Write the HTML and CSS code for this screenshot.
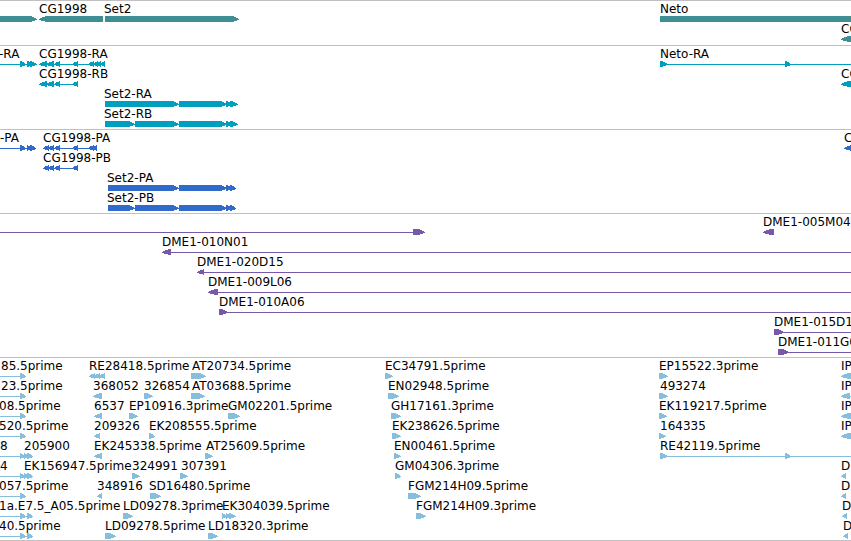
FILE: index.html
```
<!DOCTYPE html>
<html lang="en">
<head>
<meta charset="utf-8">
<title>Genome browser</title>
<link rel="stylesheet" href="styles.css">
</head>
<body>
<main class="browser">
  <section class="track gene" aria-label="Genes"></section>
  <section class="track transcript" aria-label="Transcripts"></section>
  <section class="track protein" aria-label="Proteins"></section>
  <section class="track clone" aria-label="Clones"></section>
  <section class="track est" aria-label="ESTs"></section>
</main>
<script src="tracks.js"></script>
</body>
</html>
```
FILE: styles.css
```
body {
  margin: 0;
  background: #fff;
  color: #000;
  font: 12px "DejaVu Sans", sans-serif;
}

.browser {
  overflow: hidden;
  border-bottom: 1px solid #c0c0c0;
}

.track {
  border-top: 1px solid #c0c0c0;
  padding-bottom: 3px;
}

.gene {
  color: #3f8e94;
  padding-bottom: 4px;
}

.transcript {
  color: #009fc0;
}

.protein {
  color: #306acb;
}

.clone {
  color: #7759a8;
}

.est {
  color: #87bddd;
  padding-bottom: 2px;
}

.row {
  display: block;
  width: 100%;
  height: 20px;
  overflow: visible;
}

.row text {
  fill: #000;
}

.glyph {
  fill: currentColor;
  shape-rendering: crispEdges;
}
```
FILE: tracks.js
```
// Feature: [label, label x, direction, exons, intron line start, intron line end]
const END = 4000;
const tail = [[226, 232], [230, 238]];
const proteinTail = [[226, 232], [230, 236]];
const tracks = {
  gene: [
    [["", 0, 1, [[-20, 37]]], ["CG1998", 39, -1, [[39, 103]]],
     ["Set2", 104, 1, [[105, 239]]], ["Neto", 660, 1, [[660, END]]]],
    [["CG", 841, -1, [[841, END]]]]
  ],
  transcript: [
    [["-RA", -1, 1, [[20, 26], [27, 33], [30, 37]], 0, 30],
     ["CG1998-RA", 39, -1, [[39, 47], [46, 54], [54, 60], [72, 78], [88, 94], [93, 98], [96, 101], [100, 105]], 45, 100],
     ["Neto-RA", 660, 1, [[660, 668], [785, 791]], 660, END]],
    [["CG1998-RB", 39, -1, [[39, 47], [46, 54], [54, 60], [72, 78]], 45, 78],
     ["CG", 841, -1, [[841, END]]]],
    [["Set2-RA", 104, 1, [[105, 179], [179, 227], ...tail], 110, 230]],
    [["Set2-RB", 104, 1, [[105, 135], [135, 179], [179, 227], ...tail], 110, 230]]
  ],
  protein: [
    [["-PA", 0, 1, [[20, 26], [27, 32], [30, 36]], 0, 30],
     ["CG1998-PA", 43, -1, [[43, 49], [48, 54], [54, 60], [72, 78], [88, 94], [92, 97]], 45, 95],
     ["CG", 844, -1, [[844, END]]]],
    [["CG1998-PB", 43, -1, [[43, 49], [48, 54], [54, 60], [72, 78]], 45, 78]],
    [["Set2-PA", 107, 1, [[108, 179], [179, 227], ...proteinTail], 110, 230]],
    [["Set2-PB", 107, 1, [[108, 135], [135, 179], [179, 227], ...proteinTail], 110, 230]]
  ],
  clone: [
    [["", 0, 1, [[413, 425]], 0, 414], ["DME1-005M04", 763, -1, [[763, 774]]]],
    [["DME1-010N01", 162, -1, [[162, 171]], 170, END]],
    [["DME1-020D15", 197, -1, [[197, 204]], 203, END]],
    [["DME1-009L06", 208, -1, [[208, 218]], 217, END]],
    [["DME1-010A06", 219, 1, [[219, 228]], 220, END]],
    [["DME1-015D12", 774, 1, [[774, 784]], 776, END]],
    [["DME1-011G07", 778, 1, [[778, 789]], 780, END]]
  ],
  est: [
    [["85.5prime", 1, 1, [[20, 26]], 0, 21],
     ["RE28418.5prime", 89, -1, [[89, 95], [93, 100], [98, 105]]],
     ["AT20734.5prime", 192, 1, [[191, 206]]], ["EC34791.5prime", 385, 1, [[385, 393]]],
     ["EP15522.3prime", 659, 1, [[659, 668]]], ["IP", 841, -1, [[841, END]]]],
    [["23.5prime", 1, 1, [[20, 26]], 0, 21],
     ["368052", 93, -1, [[93, 102]]], ["326854", 144, 1, [[144, 153]]],
     ["AT03688.5prime", 192, 1, [[191, 205]]], ["EN02948.5prime", 388, 1, [[388, 399]]],
     ["493274", 660, 1, [[659, 668]]], ["IP", 841, -1, [[841, 850]], 848, END]],
    [["08.5prime", -1, 1, [[20, 26]], 0, 21],
     ["6537", 94, -1, [[94, 102]]], ["EP10916.3prime", 129, 1, [[129, 138]]],
     ["GM02201.5prime", 228, 1, [[228, 240]]], ["GH17161.3prime", 391, 1, [[391, 401]]],
     ["EK119217.5prime", 659, 1, [[659, 667]]], ["IP", 841, -1, [[841, END]]]],
    [["520.5prime", -1, 1, [[20, 26]], 0, 21],
     ["209326", 94, -1, [[94, 100]]], ["EK208555.5prime", 149, 1, [[149, 155]]],
     ["EK238626.5prime", 392, 1, [[392, 401]]], ["164335", 660, 1, [[659, 666]]],
     ["IP", 841, -1, [[841, END]]]],
    [["8", 0, 1, [[20, 25], [24, 29], [27, 33]], 0, 28], ["205900", 24, 1, []],
     ["EK245338.5prime", 94, -1, [[94, 102]]], ["AT25609.5prime", 206, 1, [[205, 213]]],
     ["EN00461.5prime", 394, 1, [[394, 401]]],
     ["RE42119.5prime", 660, 1, [[660, 668], [785, 791]], 662, END]],
    [["4", 0, 1, [[20, 25], [24, 29], [27, 33]], 0, 28], ["EK156947.5prime", 24, 1, []],
     ["324991", 132, 1, [[132, 140]]], ["307391", 181, 1, [[180, 188]]],
     ["GM04306.3prime", 395, 1, [[395, 401]]], ["D", 841, -1, [[841, 846]]]],
    [["057.5prime", -1, 1, [[20, 26]], 0, 21], ["348916", 97, -1, [[97, 102]]],
     ["SD16480.5prime", 149, 1, [[150, 161]]], ["FGM214H09.5prime", 408, 1, [[408, 421]]],
     ["D", 841, -1, [[841, 846]]]],
    [["1a.E7.5_A05.5prime", -1, 1, [[20, 26], [27, 33]], 0, 28],
     ["LD09278.3prime", 123, 1, [[123, 133]]],
     ["EK304039.5prime", 222, 1, [[222, 227], [226, 231], [229, 236]]],
     ["FGM214H09.3prime", 416, 1, [[416, 426]]], ["D", 842, -1, [[842, 847]]]],
    [["40.5prime", -1, 1, [[20, 26], [27, 33]], 0, 28],
     ["LD09278.5prime", 105, 1, [[105, 116]]], ["LD18320.3prime", 208, 1, [[208, 218]]],
     ["D", 843, -1, [[843, 848]]]]
  ]
};

// Block six pixels tall with a bulging head that points in its direction.
function arrow([a, b], dir) {
  const w = Math.min(7, b - a);
  const tip = dir > 0 ? b : a;
  const back = dir > 0 ? a : b;
  const neck = tip - dir * w;
  const mid = tip - dir * Math.round(w / 2);
  return `<path d="M${back} 15H${neck}L${mid} 16L${tip} 18V19L${mid} 20L${neck} 21H${back}Z"/>`;
}

function feature([label, x, dir, exons, from, to]) {
  const line = to ? `<rect x="${from}" y="18" width="${to - from}" height="1"/>` : "";
  return `<g class="glyph">${line}${exons.map(e => arrow(e, dir)).join("")}</g>` +
    `<text x="${x}" y="12">${label}</text>`;
}

for (const [name, rows] of Object.entries(tracks)) {
  document.querySelector("." + name).innerHTML =
    rows.map(row => `<svg class="row">${row.map(feature).join("")}</svg>`).join("");
}
```
